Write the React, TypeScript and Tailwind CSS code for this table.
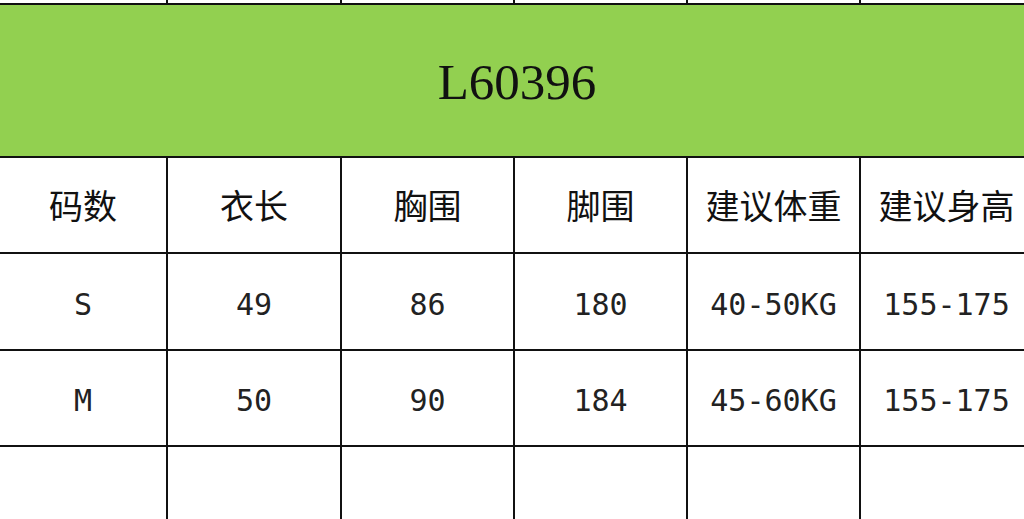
const widths = ['w-[168px]', 'w-[174px]', 'w-[173px]', 'w-[173px]', 'w-[173px]', 'w-[173px]']

const header = ['码数', '衣长', '胸围', '脚围', '建议体重', '建议身高']

const rows = [
  ['S', '49', '86', '180', '40-50KG', '155-175'],
  ['M', '50', '90', '184', '45-60KG', '155-175'],
  ['', '', '', '', '', ''],
]

const cjk = "font-['Noto_Sans_CJK_SC',sans-serif] text-[34px]"
const mono = "font-['DejaVu_Sans_Mono',monospace] text-[30px] pt-[6px] text-[#222]"

function Row({ cells, height, font }: { cells: string[]; height: string; font: string }) {
  return (
    <div className={`flex shrink-0 border-b-2 border-[#111] ${height}`}>
      {cells.map((c, i) => (
        <div
          key={i}
          className={`${widths[i]} shrink-0 flex items-center justify-center border-r-2 border-[#111] text-[#111] leading-none ${font}`}
        >
          {c}
        </div>
      ))}
    </div>
  )
}

export default function App() {
  return (
    <div className="w-[1024px] h-[519px] overflow-hidden bg-white">
      <div className="flex flex-col w-[1034px]">
        <Row cells={['', '', '', '', '', '']} height="h-[5px]" font="" />
        <div className="h-[153px] shrink-0 flex items-center justify-center bg-[#92d050] border-b-2 border-[#111]">
          <span className="font-['Liberation_Serif',serif] text-[51px] leading-none text-[#111] pt-[4px]">L60396</span>
        </div>
        <Row cells={header} height="h-[96px]" font={cjk} />
        {rows.map((r, i) => (
          <Row key={i} cells={r} height={i === 1 ? 'h-[96px]' : 'h-[97px]'} font={mono} />
        ))}
      </div>
    </div>
  )
}
